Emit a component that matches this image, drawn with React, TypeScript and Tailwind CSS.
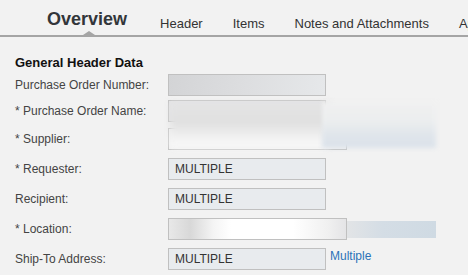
import React from 'react';

type Row = {
  label: string;
  required?: boolean;
  value?: string;
  kind: 'blur1' | 'plain' | 'blurWide' | 'value' | 'location';
  link?: string;
  mt: string;
};

const rows: Row[] = [
  { label: 'Purchase Order Number:', kind: 'blur1', mt: 'mt-[5px]' },
  { label: 'Purchase Order Name:', required: true, kind: 'plain', mt: 'mt-[4px]' },
  { label: 'Supplier:', required: true, kind: 'blurWide', mt: 'mt-[6px]' },
  { label: 'Requester:', required: true, value: 'MULTIPLE', kind: 'value', mt: 'mt-[8px]' },
  { label: 'Recipient:', value: 'MULTIPLE', kind: 'value', mt: 'mt-[8px]' },
  { label: 'Location:', required: true, kind: 'location', mt: 'mt-[8px]' },
  { label: 'Ship-To Address:', value: 'MULTIPLE', kind: 'value', link: 'Multiple', mt: 'mt-[8px]' },
];

function Field({ row }: { row: Row }) {
  if (row.kind === 'blur1') {
    return (
      <div className="w-[158px] h-[22px] border border-[#c0c0c0] bg-[linear-gradient(100deg,#d3d4d6_0%,#dcdddf_45%,#e6e8ea_100%)]" />
    );
  }
  if (row.kind === 'plain') {
    return <div className="w-[158px] h-[22px] border border-[#c0c0c0] bg-[#e4e4e5]" />;
  }
  if (row.kind === 'blurWide') {
    return <div className="w-[179px] h-[22px] border border-[#c0c0c0] bg-[#f2f2f2]" />;
  }
  if (row.kind === 'location') {
    return (
      <div className="flex items-center">
        <div className="w-[179px] h-[22px] border border-[#c0c0c0] bg-[linear-gradient(90deg,#e8e8e8_0%,#d8d8d8_12%,#f4f4f4_25%,#ffffff_35%,#ffffff_70%,#f0f0f0_90%,#e4e4e6_100%)]" />
        <div className="w-[89px] h-[17px] bg-[linear-gradient(90deg,#e2e4e6_0%,#d4dde5_40%,#cfdae3_100%)]" />
      </div>
    );
  }
  return (
    <div className="flex items-start">
      <div className="w-[158px] h-[22px] border border-[#c0c0c0] bg-[#e8ebee] flex items-center px-[6px] text-[12px] text-[#333]">
        {row.value}
      </div>
      {row.link && (
        <a className="ml-[4px] -mt-[2px] text-[12px] text-[#2b72b8] leading-[20px] cursor-pointer">{row.link}</a>
      )}
    </div>
  );
}

export default function App() {
  return (
    <div className="relative w-[468px] h-[275px] overflow-hidden bg-[#f2f2f2] text-[#333] font-['Liberation_Sans',Arial,sans-serif]">
      {/* tabs */}
      <div className="relative h-[35px] flex items-end whitespace-nowrap">
        <span className="ml-[47px] mb-[7px] text-[18px] font-bold leading-none text-[#32363a]">Overview</span>
        <span className="ml-[33px] mb-[5px] text-[13px] leading-none">Header</span>
        <span className="ml-[30px] mb-[5px] text-[13px] leading-none">Items</span>
        <span className="ml-[30px] mb-[5px] text-[13px] leading-none">Notes and Attachments</span>
        <span className="ml-[30px] mb-[5px] text-[13px] leading-none">Approvals</span>
        <div className="absolute left-[83px] bottom-0 w-0 h-0 border-l-[6px] border-r-[6px] border-b-[4px] border-l-transparent border-r-transparent border-b-[#a5a5a5]" />
      </div>
      <div className="h-[2px] bg-[#a5a5a5]" />

      {/* form */}
      <div className="pl-[15px]">
        <div className="mt-[19px] text-[13px] font-bold leading-none text-[#111]">General Header Data</div>
        {rows.map((row) => (
          <div key={row.label} className={`flex items-center h-[22px] ${row.mt}`}>
            <div className="w-[153px] text-[12px] text-[#444] whitespace-nowrap">
              {row.required && <span>* </span>}
              {row.label}
            </div>
            <Field row={row} />
          </div>
        ))}
      </div>

      {/* redacted blur */}
      <div className="absolute left-[170px] top-[102px] w-[160px] h-[46px] blur-[3px] bg-[linear-gradient(180deg,#e4e4e5_0%,#e0e0e0_45%,#f3f3f3_80%,#f9f9f9_100%)]" />
      <div className="absolute left-[322px] top-[102px] w-[114px] h-[46px] blur-[2px] bg-[linear-gradient(180deg,#f0f0f0_0%,#eceeef_40%,#dfe5eb_75%,#dbe2ea_100%)]" />
    </div>
  );
}
